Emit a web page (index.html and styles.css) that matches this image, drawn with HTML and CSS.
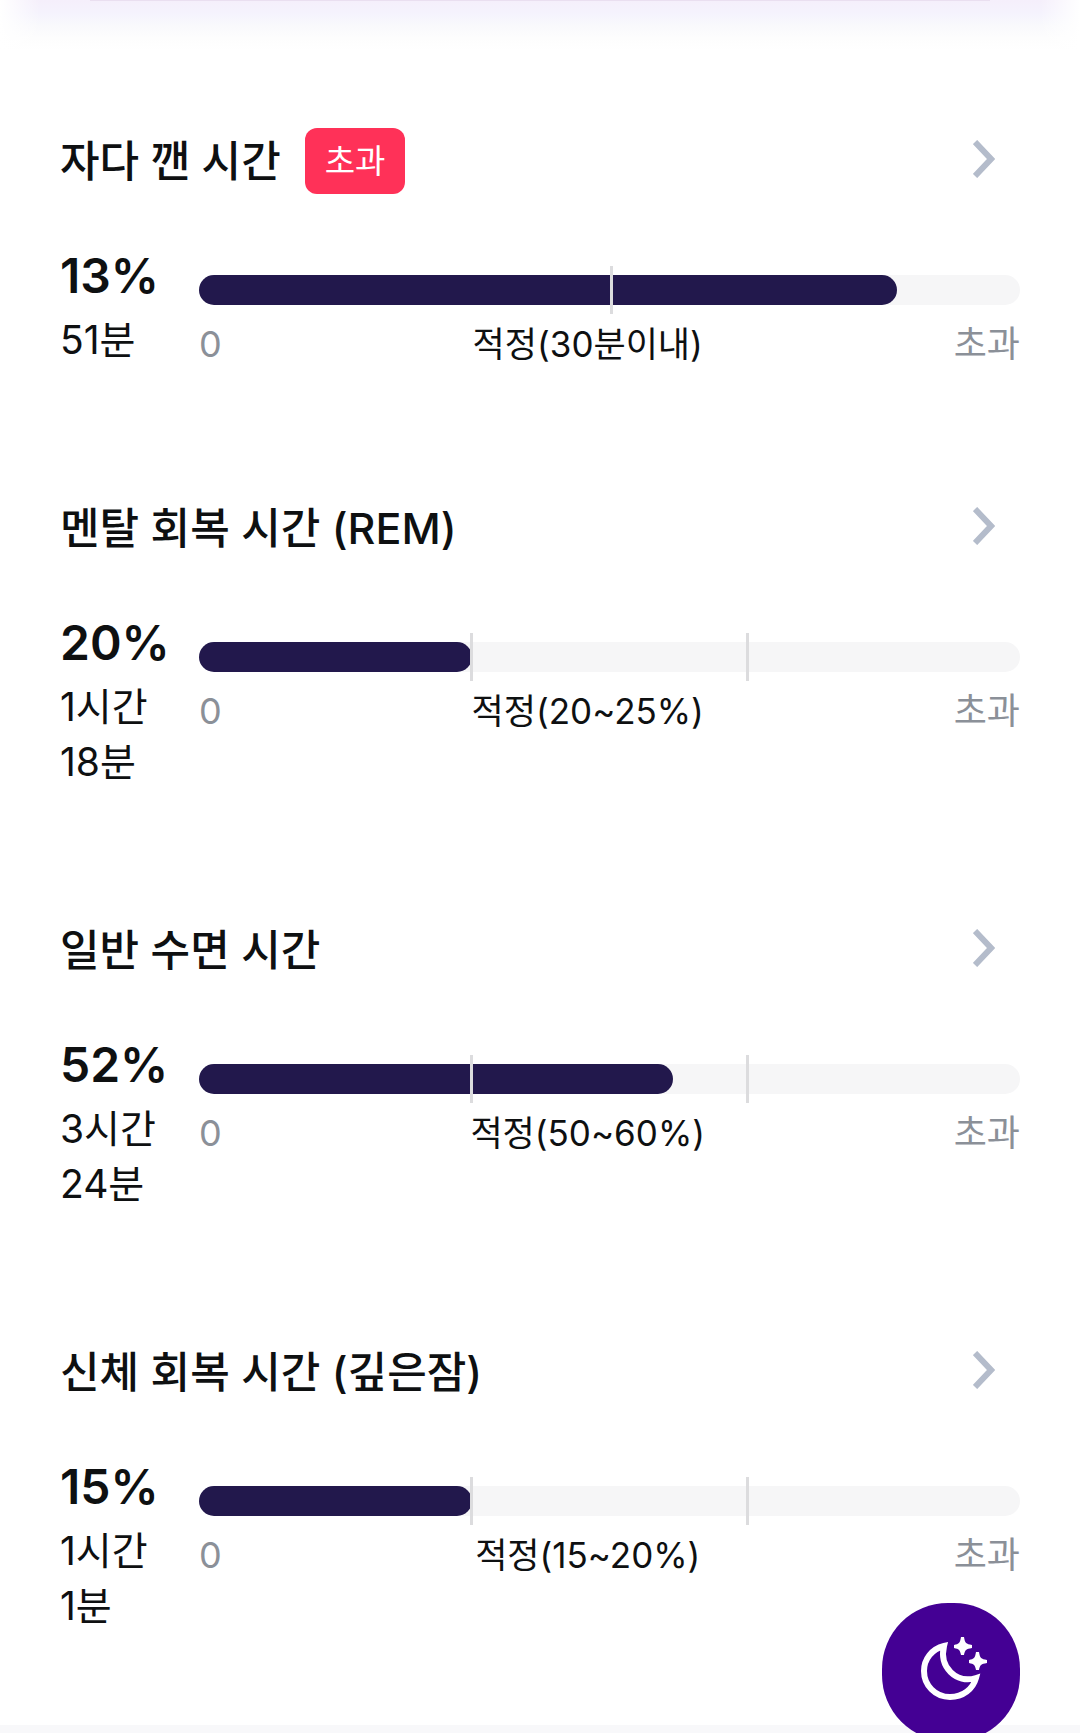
FILE: index.html
```html
<!DOCTYPE html>
<html lang="ko">
<head>
<meta charset="utf-8">
<meta name="viewport" content="width=device-width, initial-scale=1">
<title>수면 단계</title>
<link rel="stylesheet" href="styles.css">
</head>
<body>
<div class="card-edge"></div>
<main class="stages">
  <section class="stage">
    <a class="stage-head" href="#awake">
      <h2 class="stage-title">자다 깬 시간</h2>
      <span class="badge">초과</span>
      <svg class="chevron" viewBox="0 0 22 38" aria-hidden="true"><path d="M2 2 L18 19 L2 36"/></svg>
    </a>
    <div class="stage-body">
      <div class="amount"><strong class="percent">13%</strong><span class="duration">51분</span></div>
      <div class="gauge">
        <div class="track"><div class="fill" style="width:85%"></div><i class="tick tick-half"></i></div>
        <div class="scale"><span>0</span><span class="range">적정(30분이내)</span><span>초과</span></div>
      </div>
    </div>
  </section>
  <section class="stage">
    <a class="stage-head" href="#rem">
      <h2 class="stage-title">멘탈 회복 시간 (REM)</h2>
      <svg class="chevron" viewBox="0 0 22 38" aria-hidden="true"><path d="M2 2 L18 19 L2 36"/></svg>
    </a>
    <div class="stage-body">
      <div class="amount"><strong class="percent">20%</strong><span class="duration">1시간<br>18분</span></div>
      <div class="gauge">
        <div class="track"><div class="fill" style="width:33.3%"></div><i class="tick tick-low"></i><i class="tick tick-high"></i></div>
        <div class="scale"><span>0</span><span class="range">적정(20~25%)</span><span>초과</span></div>
      </div>
    </div>
  </section>
  <section class="stage">
    <a class="stage-head" href="#light">
      <h2 class="stage-title">일반 수면 시간</h2>
      <svg class="chevron" viewBox="0 0 22 38" aria-hidden="true"><path d="M2 2 L18 19 L2 36"/></svg>
    </a>
    <div class="stage-body">
      <div class="amount"><strong class="percent">52%</strong><span class="duration">3시간<br>24분</span></div>
      <div class="gauge">
        <div class="track"><div class="fill" style="width:57.7%"></div><i class="tick tick-low"></i><i class="tick tick-high"></i></div>
        <div class="scale"><span>0</span><span class="range">적정(50~60%)</span><span>초과</span></div>
      </div>
    </div>
  </section>
  <section class="stage">
    <a class="stage-head" href="#deep">
      <h2 class="stage-title">신체 회복 시간 (깊은잠)</h2>
      <svg class="chevron" viewBox="0 0 22 38" aria-hidden="true"><path d="M2 2 L18 19 L2 36"/></svg>
    </a>
    <div class="stage-body">
      <div class="amount"><strong class="percent">15%</strong><span class="duration">1시간<br>1분</span></div>
      <div class="gauge">
        <div class="track"><div class="fill" style="width:33.3%"></div><i class="tick tick-low"></i><i class="tick tick-high"></i></div>
        <div class="scale"><span>0</span><span class="range">적정(15~20%)</span><span>초과</span></div>
      </div>
    </div>
  </section>
</main>
<button class="sleep-button" type="button" aria-label="수면 시작">
  <svg viewBox="-3 1 68 68" aria-hidden="true">
    <path class="moon" d="M24 9 C12 12 4 22 4 34 C4 48 15 60 30 60 C43 60 53 52 56 41 C36 47 19 30 24 9 Z"/>
    <path class="star" d="M41 0 H44 C45 6 46 7 52 8 V11 C46 12 45 13 44 18 H41 C40 13 39 12 34 11 V8 C39 7 40 6 41 0 Z"/>
    <path class="star" d="M56 15 H59 C60 21 61 22 67 23 V26 C61 27 60 28 59 33 H56 C55 28 54 27 49 26 V23 C54 22 55 21 56 15 Z"/>
  </svg>
</button>
</body>
</html>
```
FILE: styles.css
```css
* { box-sizing: border-box; }

body {
  margin: 0;
  min-height: 100vh;
  background: #f8f8fa;
  color: #0e1011;
  font-family: Inter, "Noto Sans CJK KR", sans-serif;
}

/* Lower edge of the card above, with its soft glow */
.card-edge {
  height: 50px;
  background:
    linear-gradient(90deg, #fff, #fff0 40px, #fff0 calc(100% - 40px), #fff),
    linear-gradient(#f5effb, #f5f3fd 14px, #f9f9fc 26px, #fdfdfd 38px, #fff);
}

.card-edge::before {
  content: "";
  display: block;
  height: 1px;
  margin: 0 90px;
  background: #eadff0;
}

.stages {
  padding: 78px 60px 0;
  background: #fff;
}

.stage { padding-bottom: 128px; }
.stage:last-child { padding-bottom: 92px; }

.stage-head {
  display: flex;
  align-items: center;
  gap: 24px;
  height: 66px;
  padding-right: 25px;
  color: inherit;
  text-decoration: none;
}

.stage-title {
  margin: 0;
  font-size: 43px;
  font-weight: 500;
  line-height: 64px;
}

.badge {
  padding: 0 20px;
  border-radius: 12px;
  background: #ff3158;
  color: #fff;
  font-size: 33px;
  line-height: 66px;
}

.chevron {
  width: 22px;
  height: 38px;
  margin: 0 0 4px auto;
  fill: none;
  stroke: #b4bccb;
  stroke-width: 6px;
}

.stage-body {
  display: grid;
  grid-template-columns: 138px 1fr;
  padding-top: 46px;
}

.percent {
  display: block;
  font-size: 48px;
  font-weight: 600;
  line-height: 72px;
}

.duration {
  display: block;
  font-size: 39px;
  line-height: 55px;
}

.gauge { padding: 35px 0 0 1px; }

.track {
  position: relative;
  height: 30px;
  border-radius: 15px;
  background: #f6f6f7;
}

.fill {
  height: 100%;
  border-radius: 15px;
  background: #22184c;
}

.tick {
  position: absolute;
  top: -9px;
  width: 3px;
  height: 48px;
  background: #dcdcde;
}

.tick-half { left: 50%; }
.tick-low { left: 33%; }
.tick-high { left: 66.6%; }

.scale {
  display: flex;
  justify-content: space-between;
  padding-top: 16px;
  color: #8b9098;
  font-size: 36px;
  line-height: 46px;
}

.range {
  color: #0e1011;
  font-size: 35px;
}

.sleep-button {
  position: fixed;
  right: 60px;
  bottom: -8px;
  width: 138px;
  height: 138px;
  padding: 0;
  border: 0;
  border-radius: 66px;
  background: #440094;
}

.sleep-button svg {
  display: block;
  width: 68px;
  height: 68px;
  margin: 0 auto;
  overflow: visible;
}

.moon {
  fill: none;
  stroke: #fff;
  stroke-width: 6px;
  stroke-linejoin: miter;
}

.star { fill: #fff; }
```
